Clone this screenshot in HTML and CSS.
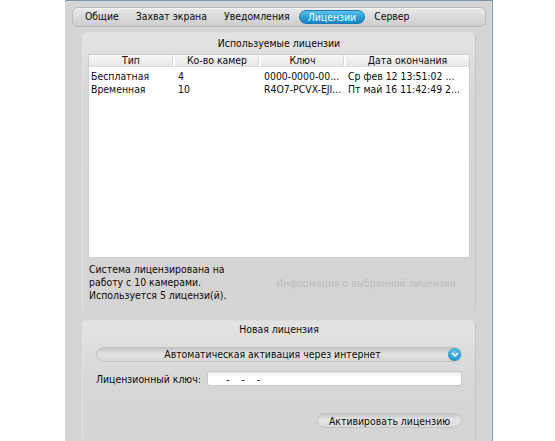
FILE: index.html
```html
<!DOCTYPE html>
<html lang="ru">
<head>
<meta charset="utf-8">
<title>Лицензии</title>
<link rel="stylesheet" href="styles.css">
</head>
<body>
<div class="window">
  <nav class="tabbar">
    <span class="tab">Общие</span>
    <span class="tab">Захват экрана</span>
    <span class="tab">Уведомления</span>
    <span class="tab active">Лицензии</span>
    <span class="tab">Сервер</span>
  </nav>

  <section class="group used">
    <div class="group-title">Используемые лицензии</div>
    <div class="table">
      <div class="thead">
        <span>Тип</span>
        <span>Ко-во камер</span>
        <span>Ключ</span>
        <span>Дата окончания</span>
      </div>
      <div class="row">
        <span>Бесплатная</span>
        <span>4</span>
        <span>0000-0000-00...</span>
        <span>Ср фев 12 13:51:02 ...</span>
      </div>
      <div class="row">
        <span>Временная</span>
        <span>10</span>
        <span>R4O7-PCVX-EJI...</span>
        <span>Пт май 16 11:42:49 2...</span>
      </div>
    </div>
    <div class="status-row">
      <p class="status">Система лицензирована на<br>работу с 10 камерами.<br>Используется 5 лицензи(й).</p>
      <button class="info-btn" disabled>Информация о выбранной лицензии</button>
    </div>
  </section>

  <section class="group new">
    <div class="group-title">Новая лицензия</div>
    <div class="combo">
      <span class="combo-text">Автоматическая активация через интернет</span>
      <span class="combo-arrow">
        <svg width="8" height="5" viewBox="0 0 8 5"><path d="M1 1 L4 4 L7 1" fill="none" stroke="#fff" stroke-width="1.4"/></svg>
      </span>
    </div>
    <div class="key-row">
      <label class="key-label">Лицензионный ключ:</label>
      <div class="key-input"><span>-</span><span>-</span><span>-</span></div>
    </div>
    <div class="actions">
      <button class="activate">Активировать лицензию</button>
    </div>
  </section>
</div>
</body>
</html>
```

FILE: styles.css
```css
* { box-sizing: border-box; }

html, body {
  margin: 0;
  padding: 0;
  background: #ffffff;
  height: 441px;
  overflow: hidden;
}

body {
  font-family: "DejaVu Sans Condensed", "DejaVu Sans", sans-serif;
  font-stretch: condensed;
  font-size: 10.4px;
  color: #0a0a0a;
}

.window {
  margin-left: 65px;
  width: 428px;
  height: 441px;
  background: #d4d4d4;
  border-top: 1px solid #7e92a8;
  border-right: 1px solid #8a9bad;
  padding: 6px 6px 0 7px;
  display: flex;
  flex-direction: column;
}

/* tab bar */
.tabbar {
  height: 20px;
  border-radius: 6px;
  border: 1px solid #b9b9b9;
  background: linear-gradient(#e9e9e9, #d9d9d9 55%, #cdcdcd);
  box-shadow: inset 0 1px 0 #f4f4f4;
  display: flex;
  align-items: center;
  gap: 1px;
  padding-left: 4px;
}

.tab {
  height: 14px;
  line-height: 13px;
  padding: 0 8px;
  border-radius: 7px;
  white-space: nowrap;
}

.tab.active {
  color: #ffffff;
  background: linear-gradient(#5ec0ec, #2b9fd6 50%, #1487c6);
  border: 1px solid #2479aa;
  line-height: 12px;
  padding: 0 8px;
}

/* group boxes */
.group {
  margin: 6px 10px 0 10px;
  border-radius: 4px;
  background: linear-gradient(#e3e3e3, #d7d7d7 60px, #d4d4d4);
  border-left: 1px solid #e4e4e4;
  border-right: 1px solid #c4c4c4;
  box-shadow: 0 -1px 0 #dedede;
  padding: 0 5px;
}

.group-title {
  height: 21px;
  line-height: 20px;
  text-align: center;
}

.used {
  height: 279px;
}

.table {
  height: 204px;
  background: #ffffff;
  border: 1px solid #cfcfcf;
}

.thead, .row {
  display: grid;
  grid-template-columns: 86px 86px 85px 1fr;
}

.thead {
  height: 12px;
  line-height: 10px;
  background: linear-gradient(#f8f8f8, #e6e6e6);
  border-bottom: 1px solid #dadada;
  text-align: center;
  margin-bottom: 3px;
}

.thead span {
  border-right: 2px solid #ffffff;
  box-shadow: inset -1px 0 0 #d8d8d8;
  white-space: nowrap;
}

.thead span:last-child {
  border-right: 0;
  box-shadow: none;
}

.row {
  height: 13px;
  line-height: 13px;
}

.row span {
  padding-left: 2px;
  white-space: nowrap;
  overflow: hidden;
}

.row span:nth-child(2) { padding-left: 3px; }
.row span:nth-child(3) { padding-left: 3px; }
.row span:nth-child(4) { padding-left: 2px; }

.status-row {
  display: flex;
  align-items: center;
  margin-top: 5px;
}

.status {
  margin: 0;
  width: 185px;
  padding-left: 1px;
  line-height: 13px;
}

.info-btn {
  font: inherit;
  border: 0;
  background: none;
  color: #bdbdbd;
  padding: 0;
  margin-left: 3px;
  white-space: nowrap;
}

/* new license */
.new {
  margin-top: 9px;
  flex: 1;
  padding: 0 13px;
}

.new .group-title {
  height: 16px;
  line-height: 17px;
}

.combo {
  margin-top: 10px;
  height: 15px;
  border-radius: 8px;
  background: linear-gradient(#c5c5c5, #e2e2e2 45%, #d6d6d6);
  border: 1px solid #c2c2c2;
  display: flex;
  align-items: center;
}

.combo-text {
  flex: 1;
  text-align: center;
  line-height: 13px;
}

.combo-arrow {
  width: 13px;
  height: 13px;
  border-radius: 50%;
  background: radial-gradient(circle at 50% 35%, #6ccaf0, #1f95d0 70%, #1680bb);
  display: flex;
  align-items: center;
  justify-content: center;
}

.key-row {
  display: flex;
  align-items: center;
  margin-top: 9px;
}

.key-label {
  width: 111px;
  white-space: nowrap;
}

.key-input {
  flex: 1;
  height: 15px;
  border-radius: 3px;
  background: linear-gradient(#e9e9e9, #ffffff 40%, #ffffff);
  border: 1px solid #cacaca;
  display: flex;
  align-items: center;
  gap: 12px;
  padding-left: 18px;
  line-height: 12px;
}

.actions {
  display: flex;
  justify-content: flex-end;
  margin-top: 27px;
}

.activate {
  font: inherit;
  color: #0a0a0a;
  height: 15px;
  width: 145px;
  padding: 0;
  border-radius: 8px;
  border: 1px solid #c4c4c4;
  background: linear-gradient(#c6c6c6, #e6e6e6 45%, #d8d8d8);
  line-height: 12px;
}
```
